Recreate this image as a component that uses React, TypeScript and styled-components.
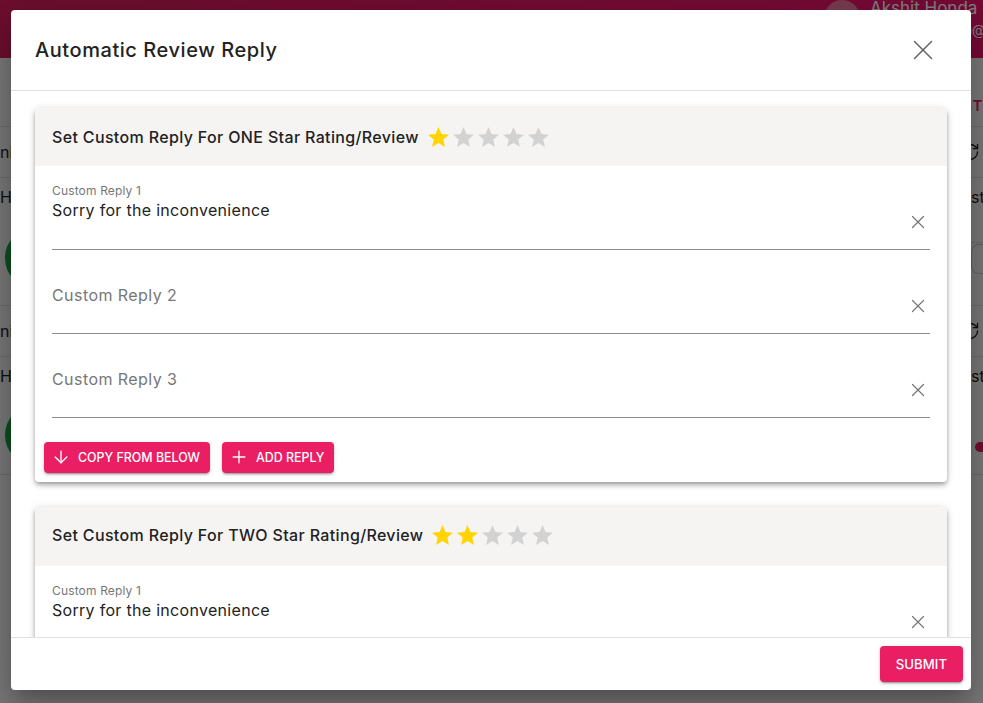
import styled, { createGlobalStyle } from "styled-components";
import { ArrowDown, Plus, RotateCw, X } from "lucide-react";

const Global = createGlobalStyle`
  html, body { margin: 0; padding: 0; height: 100%; }
  body { font-family: "Inter", "Noto Sans", sans-serif; overflow: hidden; background: #fff; }
`;

const Page = styled.div`
  position: relative;
  width: 983px;
  height: 703px;
  overflow: hidden;
  background: #f4f4f4;
  color: #222;
`;
const TopBar = styled.header`
  height: 58px;
  background: linear-gradient(90deg, #da1e5c, #f0146f);
  display: flex;
  justify-content: flex-end;
  gap: 10px;
`;
const Avatar = styled.div`
  width: 36px;
  height: 36px;
  border-radius: 50%;
  background: #f0789e;
`;
const UserInfo = styled.div`
  width: 113px;
  color: #fff;
  margin-top: -3px;
  white-space: nowrap;
`;
const UserName = styled.div`
  font-size: 17px;
  line-height: 22px;
`;
const UserMail = styled.div`
  font-size: 14px;
  line-height: 26px;
`;
const Tabs = styled.div`
  height: 69px;
  border-bottom: 1px solid #d8d8d8;
  display: flex;
  justify-content: flex-end;
  align-items: flex-start;
  padding-top: 38px;
  box-sizing: border-box;
  color: #e91e63;
  font-size: 15px;
  font-weight: 600;
  letter-spacing: 0.5px;
`;
const ListHead = styled.div`
  height: 51px;
  box-sizing: border-box;
  border-bottom: 1px solid #d8d8d8;
  display: flex;
  justify-content: space-between;
  align-items: center;
  font-size: 16px;
  padding-right: 3px;
`;
const ListBody = styled.div<{ $height: number }>`
  height: ${(p) => p.$height}px;
  box-sizing: border-box;
  border-bottom: 1px solid #d8d8d8;
  display: flex;
  justify-content: space-between;
  font-size: 16px;
  line-height: 20px;
`;
const BodyColumn = styled.div`
  padding-top: 9px;
`;
const SideColumn = styled.div`
  width: 12px;
  padding-top: 9px;
  overflow: hidden;
`;
const Ring = styled.div<{ $top: number }>`
  width: 60px;
  height: 60px;
  box-sizing: border-box;
  margin: ${(p) => p.$top}px 0 0 5px;
  border: 6px solid #18a045;
  border-radius: 50%;
`;
const SideRule = styled.div`
  height: 0;
  margin-top: 35px;
  border-top: 1px solid #d8d8d8;
`;
const OutlineBox = styled.div`
  width: 40px;
  height: 30px;
  margin-top: 1px;
  box-sizing: border-box;
  border: 1px solid #c4c4c4;
  border-radius: 8px;
`;
const TogglePill = styled.div`
  width: 30px;
  height: 10px;
  margin: 56px 0 0 4px;
  border-radius: 5px;
  background: #e91e63;
`;

const Backdrop = styled.div`
  position: absolute;
  inset: 0;
  background: rgba(0, 0, 0, 0.5);
`;
const Dialog = styled.section`
  position: absolute;
  left: 11px;
  top: 10px;
  width: 960px;
  height: 680px;
  display: flex;
  flex-direction: column;
  background: #fff;
  border-radius: 4px;
  box-shadow: 0 11px 15px -7px rgba(0, 0, 0, 0.2), 0 24px 38px 3px rgba(0, 0, 0, 0.14), 0 9px 46px 8px rgba(0, 0, 0, 0.12);
`;
const DialogHead = styled.div`
  height: 81px;
  box-sizing: border-box;
  flex: none;
  display: flex;
  align-items: center;
  justify-content: space-between;
  padding: 0 31px 0 24px;
  border-bottom: 1px solid #e0e0e0;
`;
const DialogTitle = styled.h2`
  margin: 0;
  font-size: 20px;
  font-weight: 500;
  color: #222;
  letter-spacing: 0.56px;
`;
const DialogBody = styled.div`
  flex: 1;
  min-height: 0;
  overflow: hidden;
  padding: 17px 24px 0;
`;
const DialogFoot = styled.div`
  height: 53px;
  box-sizing: border-box;
  flex: none;
  display: flex;
  align-items: center;
  justify-content: flex-end;
  padding: 0 8px;
  border-top: 1px solid #e0e0e0;
`;
const Card = styled.div`
  background: #fff;
  border-radius: 4px;
  margin-bottom: 25px;
  box-shadow: 0 2px 4px -1px rgba(0, 0, 0, 0.3), 0 4px 5px 0 rgba(0, 0, 0, 0.14), 0 1px 10px 0 rgba(0, 0, 0, 0.12);
`;
const CardHead = styled.div<{ $tall?: boolean }>`
  height: ${(p) => (p.$tall ? 59 : 58)}px;
  box-sizing: border-box;
  padding: 0 17px ${(p) => (p.$tall ? 3 : 0)}px;
  display: flex;
  align-items: center;
  gap: 7px;
  background: #f5f4f3;
  border-radius: 4px 4px 0 0;
`;
const CardTitle = styled.span`
  font-size: 16px;
  font-weight: 500;
  color: #222;
  letter-spacing: 0.35px;
`;
const Stars = styled.div`
  display: flex;
`;
const CardBody = styled.div`
  padding: 0 17px 9px;
`;
const Field = styled.div`
  position: relative;
  height: 84px;
  border-bottom: 1px solid #8c8c8c;
  box-sizing: border-box;
`;
const FieldLabel = styled.label`
  display: block;
  padding-top: 18px;
  font-size: 12px;
  line-height: 14px;
  color: #777;
  letter-spacing: 0.15px;
`;
const FieldValue = styled.div`
  font-size: 16px;
  line-height: 24px;
  color: #222;
  letter-spacing: 0.3px;
`;
const Placeholder = styled.div`
  padding-top: 33px;
  font-size: 16px;
  line-height: 24px;
  color: #777;
  letter-spacing: 0.43px;
`;
const ClearBtn = styled.span`
  position: absolute;
  right: 1px;
  bottom: 16px;
  display: flex;
  color: #757575;
`;
const Actions = styled.div`
  display: flex;
  gap: 12px;
  margin: 24px 0 0 -8px;
`;
const PinkButton = styled.button`
  display: inline-flex;
  align-items: center;
  gap: 7px;
  height: 31px;
  padding: 0 10px 1px 7px;
  border: 0;
  border-radius: 4px;
  background: #e91e63;
  color: #fff;
  font-family: inherit;
  font-size: 12.4px;
  font-weight: 500;
  box-shadow: 0 3px 1px -2px rgba(0, 0, 0, 0.2), 0 2px 2px 0 rgba(0, 0, 0, 0.14), 0 1px 5px 0 rgba(0, 0, 0, 0.12);
`;
const SubmitButton = styled(PinkButton)`
  height: 36px;
  padding: 0 16px;
  font-size: 13.2px;
`;

const Star = ({ on }: { on: boolean }) => (
  <svg width="25" height="25" viewBox="0 0 24 24" fill={on ? "#ffd400" : "#d2d2d2"}>
    <path d="M12 17.27 18.18 21l-1.64-7.03L22 9.24l-7.19-.61L12 2 9.19 8.63 2 9.24l5.46 4.73L5.82 21z" />
  </svg>
);

const Rating = ({ value }: { value: number }) => (
  <Stars>
    {[1, 2, 3, 4, 5].map((n) => (
      <Star key={n} on={n <= value} />
    ))}
  </Stars>
);

const Reply = ({ label, value }: { label: string; value?: string }) => (
  <Field>
    {value ? (
      <>
        <FieldLabel>{label}</FieldLabel>
        <FieldValue>{value}</FieldValue>
      </>
    ) : (
      <Placeholder>{label}</Placeholder>
    )}
    <ClearBtn>
      <X size={22} strokeWidth={1.3} />
    </ClearBtn>
  </Field>
);

export default function App() {
  return (
    <Page>
      <Global />
      <TopBar>
        <Avatar />
        <UserInfo>
          <UserName>Akshit Honda</UserName>
          <UserMail>akshit.honda09@</UserMail>
        </UserInfo>
      </TopBar>
      <Tabs>ST</Tabs>
      <ListHead>
        <span>ni</span>
        <RotateCw size={20} strokeWidth={1.6} />
      </ListHead>
      <ListBody $height={128}>
        <BodyColumn>
          <span>He</span>
          <Ring $top={21} />
        </BodyColumn>
        <SideColumn>
          <span>st</span>
          <SideRule />
          <OutlineBox />
        </SideColumn>
      </ListBody>
      <ListHead>
        <span>ni</span>
        <RotateCw size={20} strokeWidth={1.6} />
      </ListHead>
      <ListBody $height={118}>
        <BodyColumn>
          <span>He</span>
          <Ring $top={19} />
        </BodyColumn>
        <SideColumn>
          <span>st</span>
          <TogglePill />
        </SideColumn>
      </ListBody>
      <Backdrop />
      <Dialog>
        <DialogHead>
          <DialogTitle>Automatic Review Reply</DialogTitle>
          <X size={34} strokeWidth={1.1} color="#666" />
        </DialogHead>
        <DialogBody>
          <Card>
            <CardHead>
              <CardTitle>Set Custom Reply For ONE Star Rating/Review</CardTitle>
              <Rating value={1} />
            </CardHead>
            <CardBody>
              <Reply label="Custom Reply 1" value="Sorry for the inconvenience" />
              <Reply label="Custom Reply 2" />
              <Reply label="Custom Reply 3" />
              <Actions>
                <PinkButton>
                  <ArrowDown size={20} strokeWidth={1.6} />
                  COPY FROM BELOW
                </PinkButton>
                <PinkButton>
                  <Plus size={20} strokeWidth={1.6} />
                  ADD REPLY
                </PinkButton>
              </Actions>
            </CardBody>
          </Card>
          <Card>
            <CardHead $tall>
              <CardTitle>Set Custom Reply For TWO Star Rating/Review</CardTitle>
              <Rating value={2} />
            </CardHead>
            <CardBody>
              <Reply label="Custom Reply 1" value="Sorry for the inconvenience" />
            </CardBody>
          </Card>
        </DialogBody>
        <DialogFoot>
          <SubmitButton>SUBMIT</SubmitButton>
        </DialogFoot>
      </Dialog>
    </Page>
  );
}
